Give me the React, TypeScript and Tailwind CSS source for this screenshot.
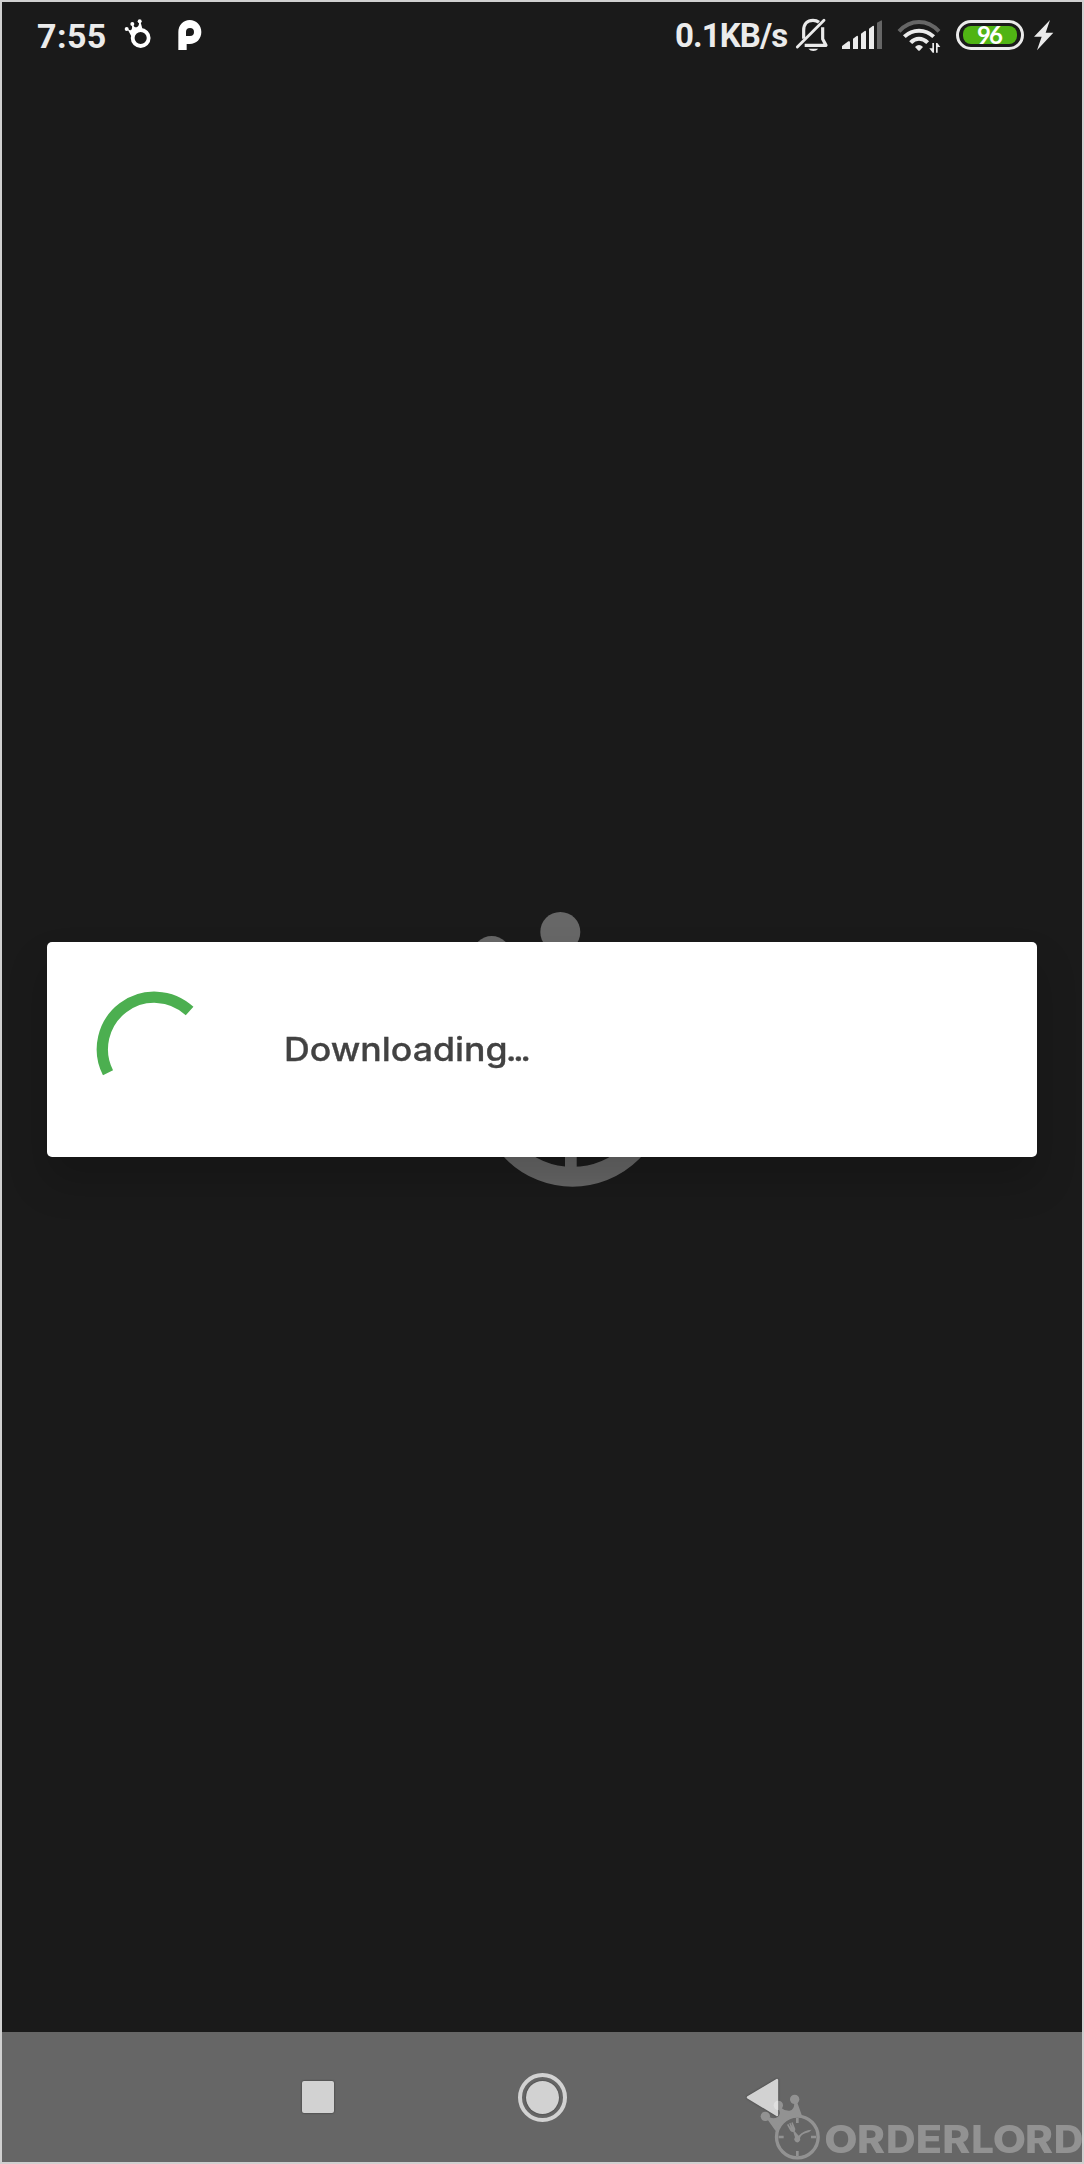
import React from "react";

function CrownIcon() {
  return (
    <svg className="h-[60px] w-[31px] shrink-0" viewBox="366 6 93 180" fill="#fff">
      <circle cx="380" cy="87" r="6" />
      <circle cx="397" cy="72" r="6" />
      <circle cx="419" cy="64" r="6" />
      <path d="M381 85L394 109L428 89L421 64L417 64Q418 80 410 82Q401 83 399 72L395 73Q399 87 392 91Q387 92 382 84Z" />
      <circle cx="422" cy="114" r="24" fill="#1a1a1a" stroke="#fff" strokeWidth="11.5" />
    </svg>
  );
}

function ParkingIcon() {
  return (
    <svg className="h-[60px] w-[27px] shrink-0" viewBox="528 6 81 180" fill="#fff">
      <path fillRule="evenodd" d="M535 150V97C535 75 550 60 569 60C589 60 604 76 604 96C604 117 589 132 569 132H560V150ZM558 108H570A12 12 0 1 0 558 96Z" />
    </svg>
  );
}

function MutedBell() {
  return (
    <svg className="ml-[8px] h-[60px] w-[34px] shrink-0" viewBox="405 6 102 180" fill="none" stroke="#ebebeb">
      <path d="M431 116V91C431 71 442 61 459 61C466 61 472 63 477 67" strokeWidth="9.5" />
      <path d="M488 82V117L498 136H434" strokeWidth="9.5" strokeLinejoin="round" />
      <path d="M412 141L492 61" strokeWidth="8.5" strokeLinecap="round" />
      <path d="M445 146H475Q469 153 460 153T445 146Z" fill="#ebebeb" stroke="none" />
    </svg>
  );
}

function Signal() {
  return (
    <svg className="ml-[11px] h-[60px] w-[44px] shrink-0" viewBox="540 6 132 180" fill="#ebebeb">
      <path d="M546 147V138L565 124Q570 122 570 127V147Z" />
      <path d="M579 147V116L590 108Q594 106 594 111V147Z" />
      <path d="M603 147V101L614 93Q618 91 618 96V147Z" />
      <path d="M627 147V86L638 78Q642 75 642 80V147Z" />
      <path d="M651 147V68L662 62Q666 59 666 65V147Z" fill="#666" />
    </svg>
  );
}

function Wifi() {
  return (
    <svg className="ml-[13px] h-[60px] w-[44px] shrink-0" viewBox="99 6 132 180" fill="none" stroke="#ebebeb" strokeWidth="12">
      <path d="M105 94Q131 66 165 66T225 94" stroke="#666" />
      <path d="M121 110Q140 92 165 92T209 110" />
      <path d="M140 128Q151 116 165 116T191 128" />
      <path d="M153 141Q165 129 177 141L168 151Q165 154 162 151Z" fill="#ebebeb" stroke="none" />
      <path d="M205 129H210V158H206L196 145H205ZM216 158V129H220L229 141H221V158Z" fill="#ebebeb" stroke="none" />
    </svg>
  );
}

function StatusBar() {
  return (
    <header className="flex h-[60px] items-start font-['Roboto',sans-serif] text-[#ebebeb]">
      <span className="ml-[35px] w-[85px] pt-[14px] text-[34px] leading-[40px] font-bold tracking-[0.4px] whitespace-nowrap">7:55</span>
      <CrownIcon />
      <span className="w-[23px]" />
      <ParkingIcon />
      <span className="ml-[472px] w-[112px] pt-[14px] text-[33px] leading-[40px] font-bold tracking-[-0.9px] whitespace-nowrap">0.1KB/s</span>
      <MutedBell />
      <Signal />
      <Wifi />
      <div className="mt-[18px] ml-[15px] flex h-[30px] w-[68px] shrink-0 items-center justify-center rounded-full border-3 border-[#ebebeb]">
        <div className="flex h-[18px] w-[54px] items-center justify-center rounded-[8px] bg-[#50b414] pr-[2px] font-['Lato',sans-serif] text-[24px] leading-[18px] font-bold tracking-[-2px] text-white">96</div>
      </div>
      <svg className="ml-[9px] h-[60px] w-[21px] shrink-0" viewBox="507 6 63 180" fill="#ebebeb">
        <path d="M558 60L510 110H533L519 151L568 98H545Z" />
      </svg>
    </header>
  );
}

function SplashLogo() {
  return (
    <svg className="absolute top-[905px] left-[468px] h-[290px] w-[210px]" viewBox="470 907 210 290" fill="#676767">
      <circle cx="560.3" cy="932" r="20" />
      <circle cx="491.7" cy="955" r="19" />
      <circle cx="572.5" cy="1092.4" r="84.3" fill="none" stroke="#676767" strokeWidth="20" />
      <path d="M565 1145H576.7V1170H565Z" />
    </svg>
  );
}

function Dialog() {
  return (
    <section className="relative mx-[45px] flex h-[215px] items-center rounded-[5px] bg-white shadow-[0_24px_40px_rgba(0,0,0,0.18)]">
      <svg className="ml-[47px] h-[120px] w-[120px]" viewBox="94 989.5 120 120" fill="none">
        <path d="M108 1072.3A52 52 0 0 1 189.6 1010.5" stroke="#4caf50" strokeWidth="11.3" />
      </svg>
      <p className="ml-[70px] origin-left scale-x-[1.115] font-['Inter',sans-serif] text-[32px] leading-[40px] font-medium whitespace-nowrap text-[#424242] [-webkit-text-stroke:0.3px_#424242]">
        Downloading<span className="tracking-[-3.2px] -ml-[1.5px]">...</span>
      </p>
    </section>
  );
}

function NavBar() {
  return (
    <nav className="flex h-[130px] items-center bg-[#666]">
      <div className="ml-[300px] h-[32px] w-[32px] rounded-[2px] bg-[#d2d2d2] shadow-[0_0_2px_rgba(0,0,0,0.6)]" />
      <div className="ml-[184px] flex h-[49px] w-[49px] items-center justify-center rounded-full border-4 border-[#d2d2d2]">
        <div className="h-[33px] w-[33px] rounded-full bg-[#d2d2d2] shadow-[0_0_2px_rgba(0,0,0,0.5)]" />
      </div>
      <svg className="ml-[175px] h-[46px] w-[42px] drop-shadow-[0_0_1px_rgba(0,0,0,0.4)]" viewBox="742 2074 42 46">
        <path d="M748 2097.4L777 2080V2115Z" fill="#d2d2d2" stroke="#d2d2d2" strokeWidth="2.4" strokeLinejoin="round" />
      </svg>
    </nav>
  );
}

const wordmark = [
  { letter: "O", x: 283, width: 100 },
  { letter: "R", x: 381, width: 84 },
  { letter: "D", x: 468, width: 89 },
  { letter: "E", x: 557, width: 79 },
  { letter: "R", x: 637, width: 84 },
  { letter: "L", x: 724, width: 68 },
  { letter: "O", x: 788, width: 100 },
  { letter: "R", x: 885, width: 84 },
  { letter: "D", x: 971, width: 89 },
];

function Watermark() {
  return (
    <svg className="absolute right-0 bottom-0 h-[72px] w-[322px] opacity-[0.29]" viewBox="90 240 966 216" fill="#fff">
      <circle cx="194" cy="268" r="14" />
      <circle cx="145" cy="286" r="14" />
      <circle cx="106" cy="319" r="14" />
      <path d="M113 329L137 363Q152 324 197 315Q207 314 217 320L202 278H193Q193 300 179 302Q163 303 154 294L147 299Q153 312 143 321Q132 328 119 322Z" />
      <circle cx="202" cy="381" r="62.5" fill="none" stroke="#fff" strokeWidth="10" />
      <path d="M198 324H206V339H198ZM198 423H206V438H198ZM146 377H161V385H146ZM243 377H258V385H243Z" />
      <path d="M171 344L175 342L182 354L178 340L181 338L188 351L184 338L188 337L196 357Q196 361 194 364L206 377Q222 360 245 359Q238 368 226 370Q214 373 210 384A9 9 0 1 1 195 382L190 366Q183 367 180 361Z" />
      <g fontFamily="Inter, sans-serif" fontSize="113" fontWeight="800">
        {wordmark.map(({ letter, x, width }) => (
          <text key={x} x={x} y="428.5" textLength={width} lengthAdjust="spacingAndGlyphs">
            {letter}
          </text>
        ))}
      </g>
    </svg>
  );
}

export default function App() {
  return (
    <main className="relative flex h-[2164px] w-[1084px] flex-col overflow-hidden border-2 border-[#d0d0d0] bg-[#1a1a1a]">
      <SplashLogo />
      <StatusBar />
      <div className="h-[880px]" />
      <Dialog />
      <div className="flex-1" />
      <NavBar />
      <Watermark />
    </main>
  );
}
